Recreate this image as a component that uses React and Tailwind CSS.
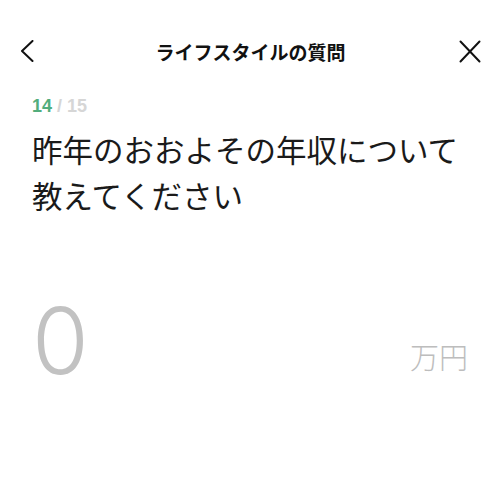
import React from 'react'

function BackIcon() {
  return (
    <svg width="14" height="22" viewBox="0 0 14 22" fill="none">
      <polyline points="12.5,1 2,11 12.5,21" stroke="#111" strokeWidth="2" strokeLinecap="round" strokeLinejoin="round" />
    </svg>
  )
}

function CloseIcon() {
  return (
    <svg width="22" height="23" viewBox="0 0 22 23" fill="none">
      <line x1="1.5" y1="1.5" x2="20.5" y2="21.5" stroke="#111" strokeWidth="2" strokeLinecap="round" />
      <line x1="20.5" y1="1.5" x2="1.5" y2="21.5" stroke="#111" strokeWidth="2" strokeLinecap="round" />
    </svg>
  )
}

export default function App() {
  const jp = { fontFamily: '"Noto Sans CJK JP", "Noto Sans", sans-serif' }

  return (
    <div className="w-[500px] h-[486px] bg-white text-[#222] overflow-hidden" style={jp}>
      {/* Header */}
      <div className="flex items-center h-[64px] pt-[38px] pl-[20px] pr-[19px]">
        <div className="w-[40px] flex">
          <BackIcon />
        </div>
        <h1 className="flex-1 text-center text-[19px] font-bold text-[#111] leading-none">ライフスタイルの質問</h1>
        <div className="w-[40px] flex justify-end">
          <CloseIcon />
        </div>
      </div>

      {/* Progress */}
      <div className="px-[32px] pt-[33px]">
        <div className="text-[18px] font-bold leading-none" style={{ fontFamily: '"Liberation Sans", Arial, sans-serif' }}>
          <span className="text-[#52ad7c]">14</span>
          <span className="text-[#d6d6d6]"> / 15</span>
        </div>

        <p className="mt-[11px] text-[30.5px] leading-[46px] text-[#1a1a1a]">
          昨年のおおよその年収について教えてください
        </p>
      </div>

      {/* Amount */}
      <div className="flex items-end justify-between px-[32px] mt-[77px]">
        <span className="text-[92px] font-light leading-none text-[#c2c2c2]" style={{ fontFamily: 'Inter, Roboto, sans-serif' }}>
          0
        </span>
        <span className="text-[29px] font-light leading-none text-[#bdbdbd] mb-[16px]">万円</span>
      </div>
    </div>
  )
}
